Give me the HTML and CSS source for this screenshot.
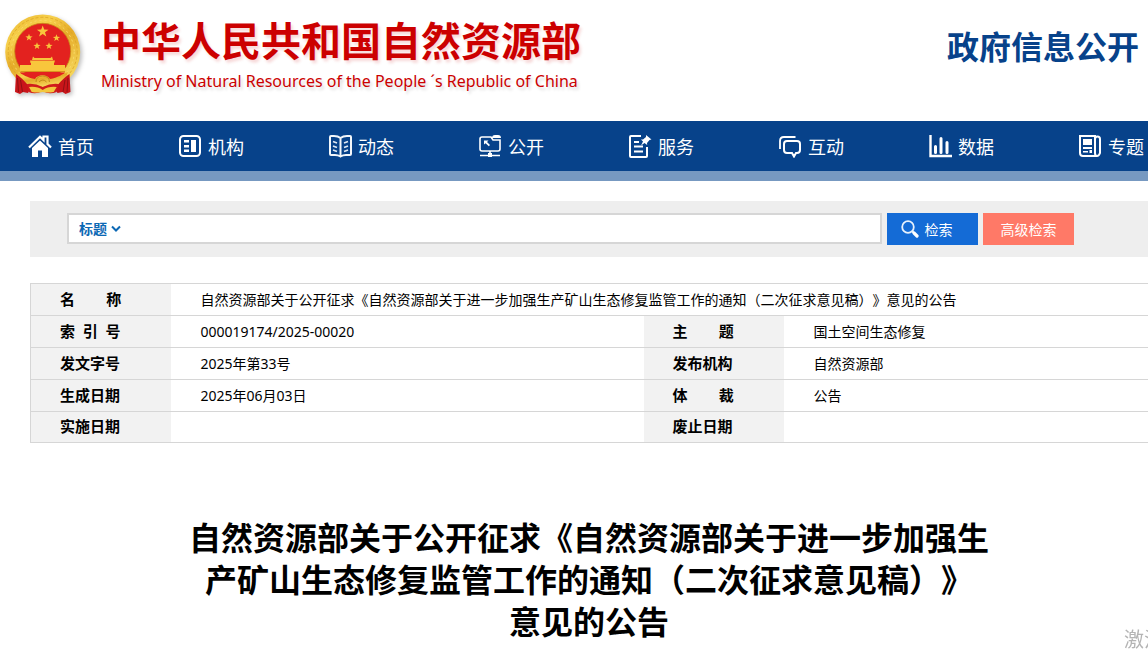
FILE: index.html
```html
<!DOCTYPE html>
<html lang="zh-CN">
<head>
<meta charset="utf-8">
<meta name="viewport" content="width=device-width, initial-scale=1">
<title>政府信息公开 - 中华人民共和国自然资源部</title>
<link rel="stylesheet" href="styles.css">
</head>
<body>
<header class="header">
  <a class="brand" href="#">
    <svg class="emblem" viewBox="0 0 90 95" aria-hidden="true">
      <defs>
        <linearGradient id="gold" x1="0" y1="0" x2="0.6" y2="1">
          <stop offset="0" stop-color="#e9b52c"/><stop offset="0.3" stop-color="#f7d04c"/><stop offset="0.55" stop-color="#e5ab28"/><stop offset="1" stop-color="#f6d75c"/>
        </linearGradient>
        <path id="star" d="M0-6 1.500-1.900 5.800-1.800 2.300.8 3.600 5 0 2.400-3.600 5-2.300.8-5.800-1.800-1.500-1.900z"/>
      </defs>
      <circle cx="42.700" cy="47" r="37.500" fill="url(#gold)"/>
      <circle cx="42.700" cy="46.800" r="34.500" fill="none" stroke="#dba427" stroke-width="0.800" stroke-dasharray="3 2"/>
      <circle cx="42.700" cy="46.800" r="31.500" fill="none" stroke="#fbdc6c" stroke-width="1" stroke-dasharray="2 3"/>
      <circle cx="42.700" cy="46.300" r="28" fill="#e3221f" stroke="#c98a16" stroke-width="0.800"/>
      <g fill="#f8c63c">
        <use href="#star" x="42.700" y="26.500"/>
        <g transform="translate(29 32.500) scale(.62)"><use href="#star"/></g>
        <g transform="translate(56.500 33) scale(.62)"><use href="#star"/></g>
        <g transform="translate(37 41) scale(.62)"><use href="#star"/></g>
        <g transform="translate(49 41) scale(.62)"><use href="#star"/></g>
        <path d="M33 51.500 34.500 53h16L52 51.500 53 55H32z"/>
        <path d="M30 55.500h25l-.8 2.500H54v2h11v6H20v-6h11v-2h-.5z"/>
        <path d="M20.500 66h44.500v1H21z" fill="#d9951d"/>
      </g>
      <path d="M20 67.500h45l-5 9H26z" fill="#e3221f"/>
      <path d="M17 67c6 2 10 6 18 7 3-5 12-5 15 0 8-1 12-5 18-7l-3 8c-6 1-8 6-14 6H34c-6 0-8-5-14-6z" fill="url(#gold)"/>
      <path d="M16 69c5 3 8 7 11 10l4 3-3 6-5-1-3 2-5-2z M69.500 69c-5 3-8 7-11 10l-4 3 3 6 5-1 3 2 5-2z" fill="#c9151a"/>
      <path d="M17.500 73l1 14 M20.500 75l2 12 M68 73l-1 14 M65 75l-2 12" stroke="#8f1014" stroke-width="1" fill="none"/>
      <path d="M27 79q8-1 15.700 3q8-4 16-3l-2 8q-8 3-14-1q-7 4-14 1z" fill="#d01c1c"/>
      <path d="M29 82q8-1 13.700 3q6-4 14-3l-3 5q-6 1-11 0q-5 1-11 0z" fill="#f3c83e"/>
      <path d="M36 77q0-6 6.700-6t6.700 6M39 77q4-4 7.500 0" fill="none" stroke="#c28a1a" stroke-width="1"/>
    </svg>
    <span class="brand-text">
      <span class="brand-cn">中华人民共和国自然资源部</span>
      <span class="brand-en" lang="en">Ministry of Natural Resources of the People ´s Republic of China</span>
    </span>
  </a>
  <div class="section-name">政府信息公开</div>
</header>

<nav class="nav">
  <a class="nav-item" href="#"><svg class="nav-icon" viewBox="0 0 24 24"><path d="M1 13.500 12 2.700l3.500 3.400V2.500h4v7.500l3.500 3.500" fill="none" stroke="#fff" stroke-width="2.200"/><path d="M12 6.500 20 14v9h-6v-6.500h-4V23H4v-9z" fill="#fff"/></svg>首页</a>
  <a class="nav-item" href="#"><svg class="nav-icon" viewBox="0 0 24 24"><rect x="2" y="2" width="20" height="20" rx="3.500" fill="none" stroke="#fff" stroke-width="2"/><path d="M6 6h5v2.500H6zM6 11h5v2.500H6zM6 15.500h5V18H6zM13 6h5v12h-5z" fill="#fff"/></svg>机构</a>
  <a class="nav-item" href="#"><svg class="nav-icon" viewBox="0 0 24 24"><path d="M12.500 4Q10 2 6 2H3Q2 2 2 3v17q0 1 1 1h4q3 0 5.500 1.500Q15 21 18 21h4q1 0 1-1V3q0-1-1-1h-3q-4 0-6.500 2zv18" fill="none" stroke="#f2f6fa" stroke-width="2"/><path d="M5 7.500 9 9M5 12l4 1.500M5 16l4 1.500M20 7.500 16 9M20 12l-4 1.500M20 16l-4 1.500" fill="none" stroke="#dfe8f2" stroke-width="1.800"/></svg>动态</a>
  <a class="nav-item" href="#"><svg class="nav-icon" viewBox="0 0 24 24"><path d="M13 3H4Q2 3 2 5v10q0 2 2 2h16q2 0 2-2V6h-7zM12 17v3M2 21.500h20" fill="none" stroke="#fff" stroke-width="1.600"/><path d="M14 4q0-3 3-3h3q3 0 3 3zM10 19h4v4h-4zM6 6.500h4.500L9 8l3 3-1.200 1.200L7.600 9.200 6 10.500z" fill="#fff"/></svg>公开</a>
  <a class="nav-item" href="#"><svg class="nav-icon" viewBox="0 0 24 24"><path d="M13 2H3q-1 0-1 1v19q0 1 1 1h15q1 0 1-1v-9" fill="none" stroke="#fff" stroke-width="2"/><path d="M6 8h5M6 12.500h9M6 17.500h9" stroke="#fff" stroke-width="1.800"/><path d="M18 1l5.500 4.500-2 .5-2.500 3 .2 2-2.700-2L13 11.500l2-4-2-2 2 .1L18 3z" fill="#fff"/></svg>服务</a>
  <a class="nav-item" href="#"><svg class="nav-icon" viewBox="0 0 24 24"><path d="M2 15V7q0-4 4-4H17.500" fill="none" stroke="#fff" stroke-width="1.800"/><path d="M9 7h10q3 0 3 3v6q0 3-3 3h-1l-2 3.500L14 19H9q-3 0-3-3v-6q0-3 3-3z" fill="none" stroke="#fff" stroke-width="2"/></svg>互动</a>
  <a class="nav-item" href="#"><svg class="nav-icon" viewBox="0 0 24 24"><path d="M2.500 1v21H24" fill="none" stroke="#fff" stroke-width="2.400"/><path d="M7.500 12.500v6M13 4.500v14M19 8.500v10" stroke="#fff" stroke-width="3" stroke-linecap="round"/></svg>数据</a>
  <a class="nav-item" href="#"><svg class="nav-icon" viewBox="0 0 24 24"><path d="M18 22H5q-3 0-3-3V2h15v17q0 3 2 3t3-3V5q0-2.500-2.500-2.500T17 5" fill="none" stroke="#fff" stroke-width="2"/><path d="M5 5h9v6H5zM5 13h9v2H5zM5 17h5v1.500H5zM11.500 16H14v3h-2.500z" fill="#fff"/></svg>专题</a>
</nav>

<main class="main">
  <form class="search">
    <div class="search-box">
      <select class="search-field" aria-label="检索范围"><option>标题</option></select>
      <svg class="chevron" viewBox="0 0 10 7" aria-hidden="true"><path d="M1 1.500 5 5.500 9 1.500" fill="none" stroke="#0c68b4" stroke-width="2"/></svg>
      <input class="search-input" type="text" aria-label="检索词">
    </div>
    <button class="btn btn-search" type="submit"><svg class="search-icon" viewBox="0 0 18 18" aria-hidden="true"><circle cx="7" cy="7" r="5.800" fill="none" stroke="#e7f1fc" stroke-width="1.800"/><path d="M11 11l1.500 1.500" stroke="#e7f1fc" stroke-width="2"/><path d="M13 13l3 3" stroke="#fff" stroke-width="3.200" stroke-linecap="round"/></svg>检索</button>
    <button class="btn btn-advanced" type="button">高级检索</button>
  </form>

  <table class="info">
    <colgroup><col class="col-label"><col class="col-value"><col class="col-label"><col></colgroup>
    <tbody>
      <tr><th scope="row">名&nbsp;&nbsp;&nbsp;&nbsp;&nbsp;&nbsp;&nbsp;&nbsp;称</th><td colspan="3">自然资源部关于公开征求《自然资源部关于进一步加强生产矿山生态修复监管工作的通知（二次征求意见稿）》意见的公告</td></tr>
      <tr><th scope="row">索&nbsp;&nbsp;引&nbsp;&nbsp;号</th><td>000019174/2025-00020</td><th scope="row">主&nbsp;&nbsp;&nbsp;&nbsp;&nbsp;&nbsp;&nbsp;&nbsp;题</th><td>国土空间生态修复</td></tr>
      <tr><th scope="row">发文字号</th><td>2025年第33号</td><th scope="row">发布机构</th><td>自然资源部</td></tr>
      <tr><th scope="row">生成日期</th><td>2025年06月03日</td><th scope="row">体&nbsp;&nbsp;&nbsp;&nbsp;&nbsp;&nbsp;&nbsp;&nbsp;裁</th><td>公告</td></tr>
      <tr class="row-last"><th scope="row">实施日期</th><td></td><th scope="row">废止日期</th><td></td></tr>
    </tbody>
  </table>

  <h1 class="title">自然资源部关于公开征求《自然资源部关于进一步加强生<br>产矿山生态修复监管工作的通知（二次征求意见稿）》<br>意见的公告</h1>
</main>
<div class="watermark">激活</div>
</body>
</html>
```
FILE: styles.css
```css
* { box-sizing: border-box; }

body {
  margin: 0;
  min-height: 100vh;
  overflow: hidden;
  background: #fff;
  color: #000;
  font-family: "Noto Sans", "Noto Sans CJK SC", sans-serif;
  font-size: 14px;
  text-spacing-trim: space-all;
}

a { color: inherit; text-decoration: none; }

.header {
  display: flex;
  justify-content: space-between;
  align-items: flex-start;
  height: 121px;
  padding: 5px 9px 0 0;
}

.brand { display: flex; color: #c00; }
.emblem {
  width: 90px;
  height: 95px;
  filter: drop-shadow(2px 2px 2px rgba(0, 0, 0, 0.25));
}
.brand-text { display: flex; flex-direction: column; padding: 8px 0 0 11px; }
.brand-cn {
  font-size: 40px;
  line-height: 56px;
  font-weight: 700;
  text-shadow: 2px 3px 3px rgba(204, 0, 0, 0.15);
}
.brand-en {
  font-size: 16px;
  line-height: 24px;
  text-shadow: 2px 3px 3px rgba(0, 0, 0, 0.15);
}
.section-name {
  padding-top: 20px;
  color: #07428a;
  font-size: 32px;
  line-height: 44px;
  font-weight: 700;
}

.nav {
  display: flex;
  height: 60px;
  background: #07428a;
  border-bottom: 10px solid #7799c1;
}
.nav-item {
  display: flex;
  flex: 0 0 150px;
  align-items: center;
  gap: 6px;
  padding-left: 28px;
  color: #fff;
  font-size: 18px;
  white-space: nowrap;
}
.nav-icon { width: 24px; height: 24px; }

.main { padding: 20px 0 0 30px; }

.search {
  display: flex;
  gap: 5px;
  padding: 12px 74px 12px 37px;
  background: #eee;
}
.search-box {
  display: flex;
  flex: 1;
  align-items: center;
  height: 31px;
  padding-left: 10px;
  background: #fff;
  border: 2px solid #d6d6d6;
}
.search-field {
  appearance: none;
  width: 32px;
  padding: 0 0 2px;
  border: 0;
  background: transparent;
  color: #0c68b4;
  font: 700 14px "Noto Sans CJK SC", sans-serif;
}
.chevron { width: 10px; height: 7px; }
.search-input {
  flex: 1;
  min-width: 0;
  border: 0;
  outline: 0;
  font: inherit;
}
.btn {
  display: flex;
  align-items: center;
  justify-content: center;
  gap: 6px;
  width: 91px;
  height: 32px;
  padding: 0;
  border: 0;
  color: #fff;
  font: 14px "Noto Sans CJK SC", sans-serif;
}
.btn-search { padding-right: 12px; background: #146bd6; }
.btn-advanced { background: #ff7967; }
.search-icon { width: 18px; height: 18px; }

.info {
  width: 100%;
  margin-top: 26px;
  border-collapse: collapse;
  table-layout: fixed;
  border-left: 1px solid #d6d6d6;
}
.col-label { width: 140px; }
.col-value { width: 473px; }
.info th,
.info td {
  height: 32px;
  padding: 0 0 0 30px;
  border-top: 1px solid #d6d6d6;
  border-bottom: 1px solid #d6d6d6;
  line-height: 24px;
  text-align: left;
  white-space: nowrap;
}
.info th {
  padding: 0 0 2px 29px;
  background: #f2f2f2;
  font-size: 15px;
}
.info .row-last th,
.info .row-last td { height: 31px; }

.title {
  margin: 74px 0 0;
  font-size: 32px;
  line-height: 42px;
  font-weight: 700;
  text-align: center;
}

.watermark {
  position: fixed;
  right: -16px;
  bottom: -6px;
  color: #b4b4b4;
  font-size: 20px;
  line-height: 30px;
}
```
